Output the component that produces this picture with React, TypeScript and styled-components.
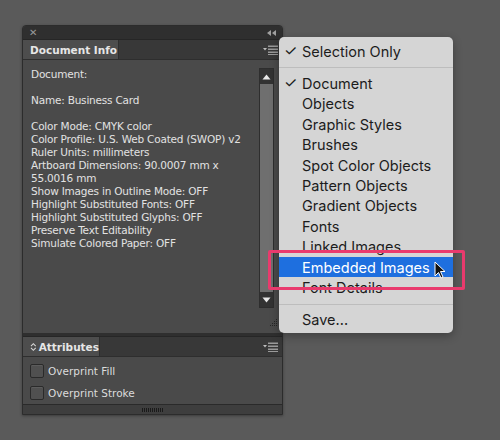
import styled, { createGlobalStyle } from 'styled-components';

const GlobalStyle = createGlobalStyle`
    html, body {
        margin: 0;
        padding: 0;
        background: #5a5a5a;
    }
`;

const StyledPage = styled.div`
    position: relative;
    width: 500px;
    height: 440px;
    overflow: hidden;
    background: #5a5a5a;
    padding: 25px 0 0 22px;
    box-sizing: border-box;
    font-family: 'DejaVu Sans', Verdana, sans-serif;
`;

const StyledPanel = styled.div`
    width: 259px;
    display: flex;
    flex-direction: column;
    background: #4a4a4a;
    border: 1px solid #2c2c2c;
    border-radius: 4px 4px 0 0;
    box-shadow: 0 1px 3px rgba(0, 0, 0, 0.35);
    overflow: hidden;
`;

const StyledTitleBar = styled.div`
    height: 13px;
    background: #2f2f2f;
    display: flex;
    align-items: center;
    justify-content: space-between;
    padding: 0 6px 0 6px;
    color: #9a9a9a;
    font-size: 10px;
    line-height: 1;
`;

const StyledTabRow = styled.div`
    height: 19px;
    background: #383838;
    display: flex;
    align-items: stretch;
    justify-content: space-between;
    border-top: 1px solid #262626;
    border-bottom: 1px solid #2e2e2e;
`;

const StyledTab = styled.div<{ $width: number }>`
    width: ${(p) => p.$width}px;
    background: #4d4d4d;
    color: #e6e6e6;
    font-size: 10.5px;
    font-weight: bold;
    display: flex;
    align-items: center;
    gap: 2px;
    padding-left: 7px;
    box-sizing: border-box;
    border-right: 1px solid #2e2e2e;
`;

const StyledMenuIcon = styled.div`
    display: flex;
    align-items: center;
    padding-right: 4px;
`;

const StyledInfoArea = styled.div`
    position: relative;
    height: 273px;
    display: flex;
    justify-content: space-between;
    padding: 8px 8px 0 8px;
    box-sizing: border-box;
`;

const StyledInfoText = styled.div`
    color: #e2e2e2;
    font-size: 10.5px;
    letter-spacing: -0.2px;
    line-height: 13px;
    white-space: pre;
`;

const StyledScrollbar = styled.div`
    width: 13px;
    height: 238px;
    display: flex;
    flex-direction: column;
    border: 1px solid #2e2e2e;
    background: #333;
`;

const StyledScrollArrow = styled.div`
    height: 15px;
    background: #333;
    display: flex;
    align-items: center;
    justify-content: center;
`;

const StyledScrollThumb = styled.div`
    flex: 1;
    background: #6f6f6f;
`;

const StyledGrip = styled.div`
    position: absolute;
    right: 4px;
    bottom: 2px;
`;

const StyledSeparator = styled.div`
    height: 3px;
    background: #2f2f2f;
`;

const StyledAttrArea = styled.div`
    display: flex;
    flex-direction: column;
    gap: 9px;
    padding: 7px 7px 5px 7px;
`;

const StyledCheckRow = styled.label`
    height: 13px;
    display: flex;
    align-items: center;
    gap: 4px;
    color: #dcdcdc;
    font-size: 10.5px;
`;

const StyledCheckbox = styled.span`
    width: 12px;
    height: 12px;
    background: #505050;
    border: 1px solid #2a2a2a;
    border-radius: 2px;
    box-shadow: inset 0 1px 0 #5c5c5c;
`;

const StyledBottomBar = styled.div`
    height: 9px;
    background: #3e3e3e;
    border-top: 1px solid #2a2a2a;
    display: flex;
    align-items: center;
    justify-content: center;
`;

const StyledBottomGrip = styled.div`
    width: 22px;
    height: 4px;
    background: repeating-linear-gradient(
        90deg,
        #1a1a1a 0 1px,
        #3e3e3e 1px 2px
    );
`;

const StyledMenu = styled.div`
    position: absolute;
    left: 279px;
    top: 37px;
    width: 174px;
    padding: 4px 0 3px 0;
    background: #d5d5d5;
    border-radius: 5px;
    box-shadow: 0 3px 10px rgba(0, 0, 0, 0.3);
    font-family: 'Inter', 'Liberation Sans', sans-serif;
    font-size: 14.5px;
    color: #1c1c1c;
`;

const StyledMenuItem = styled.div<{ $active?: boolean }>`
    height: 20.4px;
    display: flex;
    align-items: center;
    padding-left: 23px;
    position: relative;
    background: ${(p) => (p.$active ? '#1e6fdf' : 'transparent')};
    color: ${(p) => (p.$active ? '#ffffff' : '#1c1c1c')};
`;

const StyledCheck = styled.span`
    position: absolute;
    left: 5px;
    top: 0;
    font-size: 15px;
`;

const StyledMenuSeparator = styled.div`
    height: 1px;
    background: #bdbdbd;
    margin: 6px 0 5px 0;
`;

const StyledHighlightBox = styled.div`
    position: absolute;
    left: 268px;
    top: 250px;
    width: 197px;
    height: 40px;
    border: 3px solid #e93a6d;
    border-radius: 2px;
    box-sizing: border-box;
`;

const StyledCursor = styled.svg`
    position: absolute;
    left: 434px;
    top: 261px;
`;

const TriangleUp = () => (
    <svg width="9" height="6" viewBox="0 0 9 6">
        <path d="M4.5 0.5 L8.5 5.5 L0.5 5.5 Z" fill="#e8e8e8" />
    </svg>
);

const TriangleDown = () => (
    <svg width="9" height="6" viewBox="0 0 9 6">
        <path d="M0.5 0.5 L8.5 0.5 L4.5 5.5 Z" fill="#e8e8e8" />
    </svg>
);

const PanelMenuIcon = () => (
    <svg width="15" height="10" viewBox="0 0 15 10">
        <path d="M0 3 L4 3 L2 5.5 Z" fill="#bdbdbd" />
        <rect x="5" y="0.5" width="10" height="1.5" fill="#9a9a9a" />
        <rect x="5" y="3.5" width="10" height="1.5" fill="#9a9a9a" />
        <rect x="5" y="6.5" width="10" height="1.5" fill="#9a9a9a" />
        <rect x="5" y="9" width="10" height="1" fill="#9a9a9a" />
    </svg>
);

const CollapseIcon = () => (
    <svg width="9" height="6" viewBox="0 0 9 6">
        <path d="M0 3 L4 0 L4 6 Z M5 3 L9 0 L9 6 Z" fill="#a0a0a0" />
    </svg>
);

const SortIcon = () => (
    <svg width="7" height="10" viewBox="0 0 7 10">
        <path
            d="M1 4 L3.5 1.5 L6 4 M1 6 L3.5 8.5 L6 6"
            stroke="#d8d8d8"
            strokeWidth="1.1"
            fill="none"
        />
    </svg>
);

const ResizeGrip = () => (
    <svg width="10" height="10" viewBox="0 0 10 10">
        {[
            [8, 2],
            [6, 4],
            [8, 4],
            [4, 6],
            [6, 6],
            [8, 6],
            [2, 8],
            [4, 8],
            [6, 8],
            [8, 8],
        ].map(([x, y]) => (
            <rect key={`${x}-${y}`} x={x} y={y} width="1" height="1" fill="#262626" />
        ))}
    </svg>
);

const infoLines = [
    'Document:',
    '',
    'Name: Business Card',
    '',
    'Color Mode: CMYK color',
    'Color Profile: U.S. Web Coated (SWOP) v2',
    'Ruler Units: millimeters',
    'Artboard Dimensions: 90.0007 mm x',
    '55.0016 mm',
    'Show Images in Outline Mode: OFF',
    'Highlight Substituted Fonts: OFF',
    'Highlight Substituted Glyphs: OFF',
    'Preserve Text Editability',
    'Simulate Colored Paper: OFF',
];

const menuItems = [
    'Document',
    'Objects',
    'Graphic Styles',
    'Brushes',
    'Spot Color Objects',
    'Pattern Objects',
    'Gradient Objects',
    'Fonts',
    'Linked Images',
    'Embedded Images',
    'Font Details',
];

const App = () => {
    return (
        <StyledPage>
            <GlobalStyle />
            <StyledPanel>
                <StyledTitleBar>
                    <span>✕</span>
                    <CollapseIcon />
                </StyledTitleBar>
                <StyledTabRow>
                    <StyledTab $width={96}>Document Info</StyledTab>
                    <StyledMenuIcon>
                        <PanelMenuIcon />
                    </StyledMenuIcon>
                </StyledTabRow>
                <StyledInfoArea>
                    <StyledInfoText>{infoLines.join('\n')}</StyledInfoText>
                    <StyledScrollbar>
                        <StyledScrollArrow>
                            <TriangleUp />
                        </StyledScrollArrow>
                        <StyledScrollThumb />
                        <StyledScrollArrow>
                            <TriangleDown />
                        </StyledScrollArrow>
                    </StyledScrollbar>
                    <StyledGrip>
                        <ResizeGrip />
                    </StyledGrip>
                </StyledInfoArea>
                <StyledSeparator />
                <StyledTabRow>
                    <StyledTab $width={77}>
                        <SortIcon />
                        Attributes
                    </StyledTab>
                    <StyledMenuIcon>
                        <PanelMenuIcon />
                    </StyledMenuIcon>
                </StyledTabRow>
                <StyledAttrArea>
                    <StyledCheckRow>
                        <StyledCheckbox />
                        Overprint Fill
                    </StyledCheckRow>
                    <StyledCheckRow>
                        <StyledCheckbox />
                        Overprint Stroke
                    </StyledCheckRow>
                </StyledAttrArea>
                <StyledBottomBar>
                    <StyledBottomGrip />
                </StyledBottomBar>
            </StyledPanel>

            <StyledMenu>
                <StyledMenuItem>
                    <StyledCheck>✓</StyledCheck>
                    Selection Only
                </StyledMenuItem>
                <StyledMenuSeparator />
                {menuItems.map((item) => (
                    <StyledMenuItem key={item} $active={item === 'Embedded Images'}>
                        {item === 'Document' && <StyledCheck>✓</StyledCheck>}
                        {item}
                    </StyledMenuItem>
                ))}
                <StyledMenuSeparator />
                <StyledMenuItem>Save...</StyledMenuItem>
            </StyledMenu>

            <StyledHighlightBox />
            <StyledCursor width="12" height="18" viewBox="0 0 12 18">
                <path
                    d="M1 1 L1 15 L4.5 11.5 L7 17 L9 16 L6.5 10.5 L11 10.5 Z"
                    fill="#111"
                    stroke="#fff"
                    strokeWidth="1"
                />
            </StyledCursor>
        </StyledPage>
    );
};

export default App;
